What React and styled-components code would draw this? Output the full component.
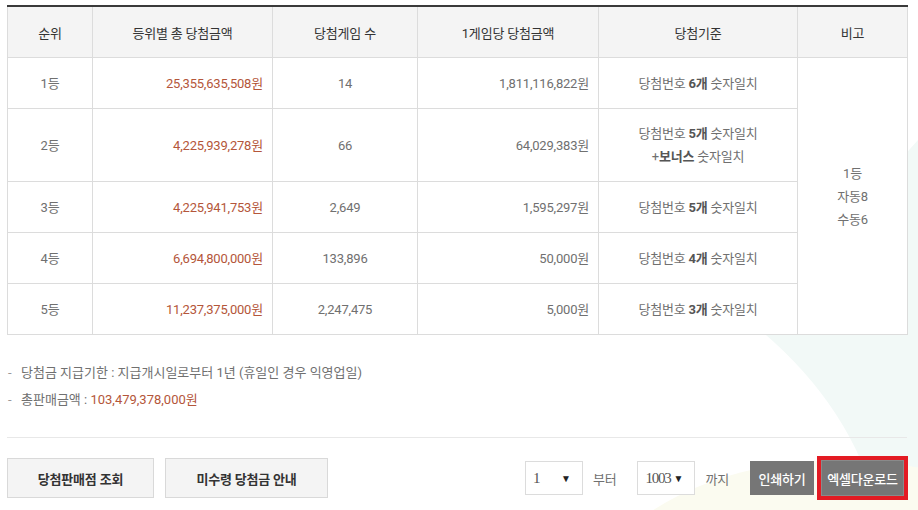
import React from "react";
import styled, { createGlobalStyle } from "styled-components";

const GlobalStyle = createGlobalStyle`
  html, body {
    margin: 0;
    padding: 0;
    background: #fff;
  }
  body {
    font-family: "Roboto", "Noto Sans CJK KR", sans-serif;
    font-size: 13px;
    letter-spacing: -0.2px;
    color: #707070;
  }
`;

const Page = styled.div`
  position: relative;
  width: 918px;
  height: 510px;
  overflow: hidden;
`;

const Backdrop = styled.svg`
  position: absolute;
  left: 0;
  top: 0;
  z-index: 0;
  pointer-events: none;
`;

const Content = styled.div`
  position: relative;
  z-index: 1;
  padding: 5px 12px 0 7px;
`;

const Table = styled.table`
  width: 900px;
  border-collapse: collapse;
  table-layout: fixed;
  border-top: 2px solid #3a3a3a;
  background: #fff;
`;

const Th = styled.th`
  height: 50px;
  padding: 0;
  background: #f4f4f4;
  border: 1px solid #dcdcdc;
  border-top: none;
  font-weight: 400;
  color: #333;
  text-align: center;
`;

const Td = styled.td`
  height: 50px;
  padding: 0 ${p => (p.$align === "right" ? "9px" : "0")} 0 0;
  border: 1px solid #dcdcdc;
  text-align: ${p => p.$align || "center"};
  color: ${p => (p.$accent ? "#b4563a" : "#707070")};
  line-height: 23px;
  background: #fff;
`;

const Strong = styled.b`
  font-weight: 700;
  color: #555;
`;

const Notes = styled.ul`
  list-style: none;
  margin: 24px 0 0;
  padding: 0;
  letter-spacing: 0;
`;

const Note = styled.li`
  position: relative;
  padding-left: 14px;
  line-height: 27px;
  &::before {
    content: "-";
    position: absolute;
    left: 1px;
    color: #999;
  }
`;

const Accent = styled.span`
  color: #b4563a;
`;

const Divider = styled.hr`
  width: 900px;
  margin: 24px 0 0;
  border: none;
  border-top: 1px solid #e8e8e8;
`;

const Toolbar = styled.div`
  display: flex;
  justify-content: space-between;
  align-items: center;
  width: 896px;
  margin-top: 20px;
`;

const Group = styled.div`
  display: flex;
  align-items: center;
  gap: ${p => p.$gap || 0}px;
`;

const LightButton = styled.button`
  width: ${p => p.$w}px;
  height: 40px;
  border: 1px solid #d9d9d9;
  background: #f4f4f4;
  font-family: inherit;
  font-size: 13px;
  letter-spacing: -0.2px;
  font-weight: 700;
  color: #333;
  cursor: pointer;
`;

const SelectBox = styled.div`
  box-sizing: border-box;
  display: flex;
  justify-content: space-between;
  align-items: center;
  width: 58px;
  height: 34px;
  padding: 0 11px 0 7px;
  border: 1px solid #dcdcdc;
  background: #fff;
  font-family: "Liberation Serif", serif;
  font-size: 15px;
  letter-spacing: -1.2px;
  color: #555;
`;

const Arrow = styled.span`
  font-size: 10px;
  color: #222;
  letter-spacing: 0;
`;

const Label = styled.span`
  margin: 0 ${p => p.$right}px 0 10px;
  color: #707070;
`;

const DarkButton = styled.button`
  width: ${p => p.$w}px;
  height: 34px;
  padding: 0;
  border: none;
  background: #767676;
  color: #fff;
  font-family: inherit;
  font-size: 13px;
  letter-spacing: -0.2px;
  font-weight: 500;
  cursor: pointer;
  box-shadow: ${p => (p.$marked ? "0 0 0 1px #8a8a8a, 0 0 0 5px #e31b23" : "none")};
`;

const rows = [
  { rank: "1등", total: "25,355,635,508원", count: "14", each: "1,811,116,822원", crit: <>당첨번호 <Strong>6개</Strong> 숫자일치</> },
  { rank: "2등", total: "4,225,939,278원", count: "66", each: "64,029,383원", crit: <>당첨번호 <Strong>5개</Strong> 숫자일치<br />+<Strong>보너스</Strong> 숫자일치</>, tall: true },
  { rank: "3등", total: "4,225,941,753원", count: "2,649", each: "1,595,297원", crit: <>당첨번호 <Strong>5개</Strong> 숫자일치</> },
  { rank: "4등", total: "6,694,800,000원", count: "133,896", each: "50,000원", crit: <>당첨번호 <Strong>4개</Strong> 숫자일치</> },
  { rank: "5등", total: "11,237,375,000원", count: "2,247,475", each: "5,000원", crit: <>당첨번호 <Strong>3개</Strong> 숫자일치</> },
];

const App = () => (
  <Page>
    <GlobalStyle />
    <Backdrop width="918" height="510" viewBox="0 0 918 510">
      <path d="M918 140 Q 820 250 748 320 Q 850 400 878 510 L 918 510 Z" fill="#f2f9f7" />
      <ellipse cx="840" cy="625" rx="260" ry="165" fill="#fbfbf0" />
    </Backdrop>
    <Content>
      <Table>
        <colgroup>
          <col style={{ width: 85 }} />
          <col style={{ width: 180 }} />
          <col style={{ width: 145 }} />
          <col style={{ width: 181 }} />
          <col style={{ width: 199 }} />
          <col style={{ width: 110 }} />
        </colgroup>
        <thead>
          <tr>
            <Th>순위</Th>
            <Th>등위별 총 당첨금액</Th>
            <Th>당첨게임 수</Th>
            <Th>1게임당 당첨금액</Th>
            <Th>당첨기준</Th>
            <Th>비고</Th>
          </tr>
        </thead>
        <tbody>
          {rows.map((r, i) => (
            <tr key={r.rank} style={r.tall ? { height: 73 } : undefined}>
              <Td>{r.rank}</Td>
              <Td $align="right" $accent>{r.total}</Td>
              <Td>{r.count}</Td>
              <Td $align="right">{r.each}</Td>
              <Td>{r.crit}</Td>
              {i === 0 && (
                <Td rowSpan={5}>1등<br />자동8<br />수동6</Td>
              )}
            </tr>
          ))}
        </tbody>
      </Table>

      <Notes>
        <Note>당첨금 지급기한 : 지급개시일로부터 1년 (휴일인 경우 익영업일)</Note>
        <Note>총판매금액 : <Accent>103,479,378,000원</Accent></Note>
      </Notes>

      <Divider />

      <Toolbar>
        <Group $gap={11}>
          <LightButton $w={147}>당첨판매점 조회</LightButton>
          <LightButton $w={163}>미수령 당첨금 안내</LightButton>
        </Group>
        <Group>
          <SelectBox>1<Arrow>▼</Arrow></SelectBox>
          <Label $right={21}>부터</Label>
          <SelectBox>1003<Arrow>▼</Arrow></SelectBox>
          <Label $right={21}>까지</Label>
          <Group $gap={8}>
            <DarkButton $w={64}>인쇄하기</DarkButton>
            <DarkButton $w={81} $marked>엑셀다운로드</DarkButton>
          </Group>
        </Group>
      </Toolbar>
    </Content>
  </Page>
);

export default App;
